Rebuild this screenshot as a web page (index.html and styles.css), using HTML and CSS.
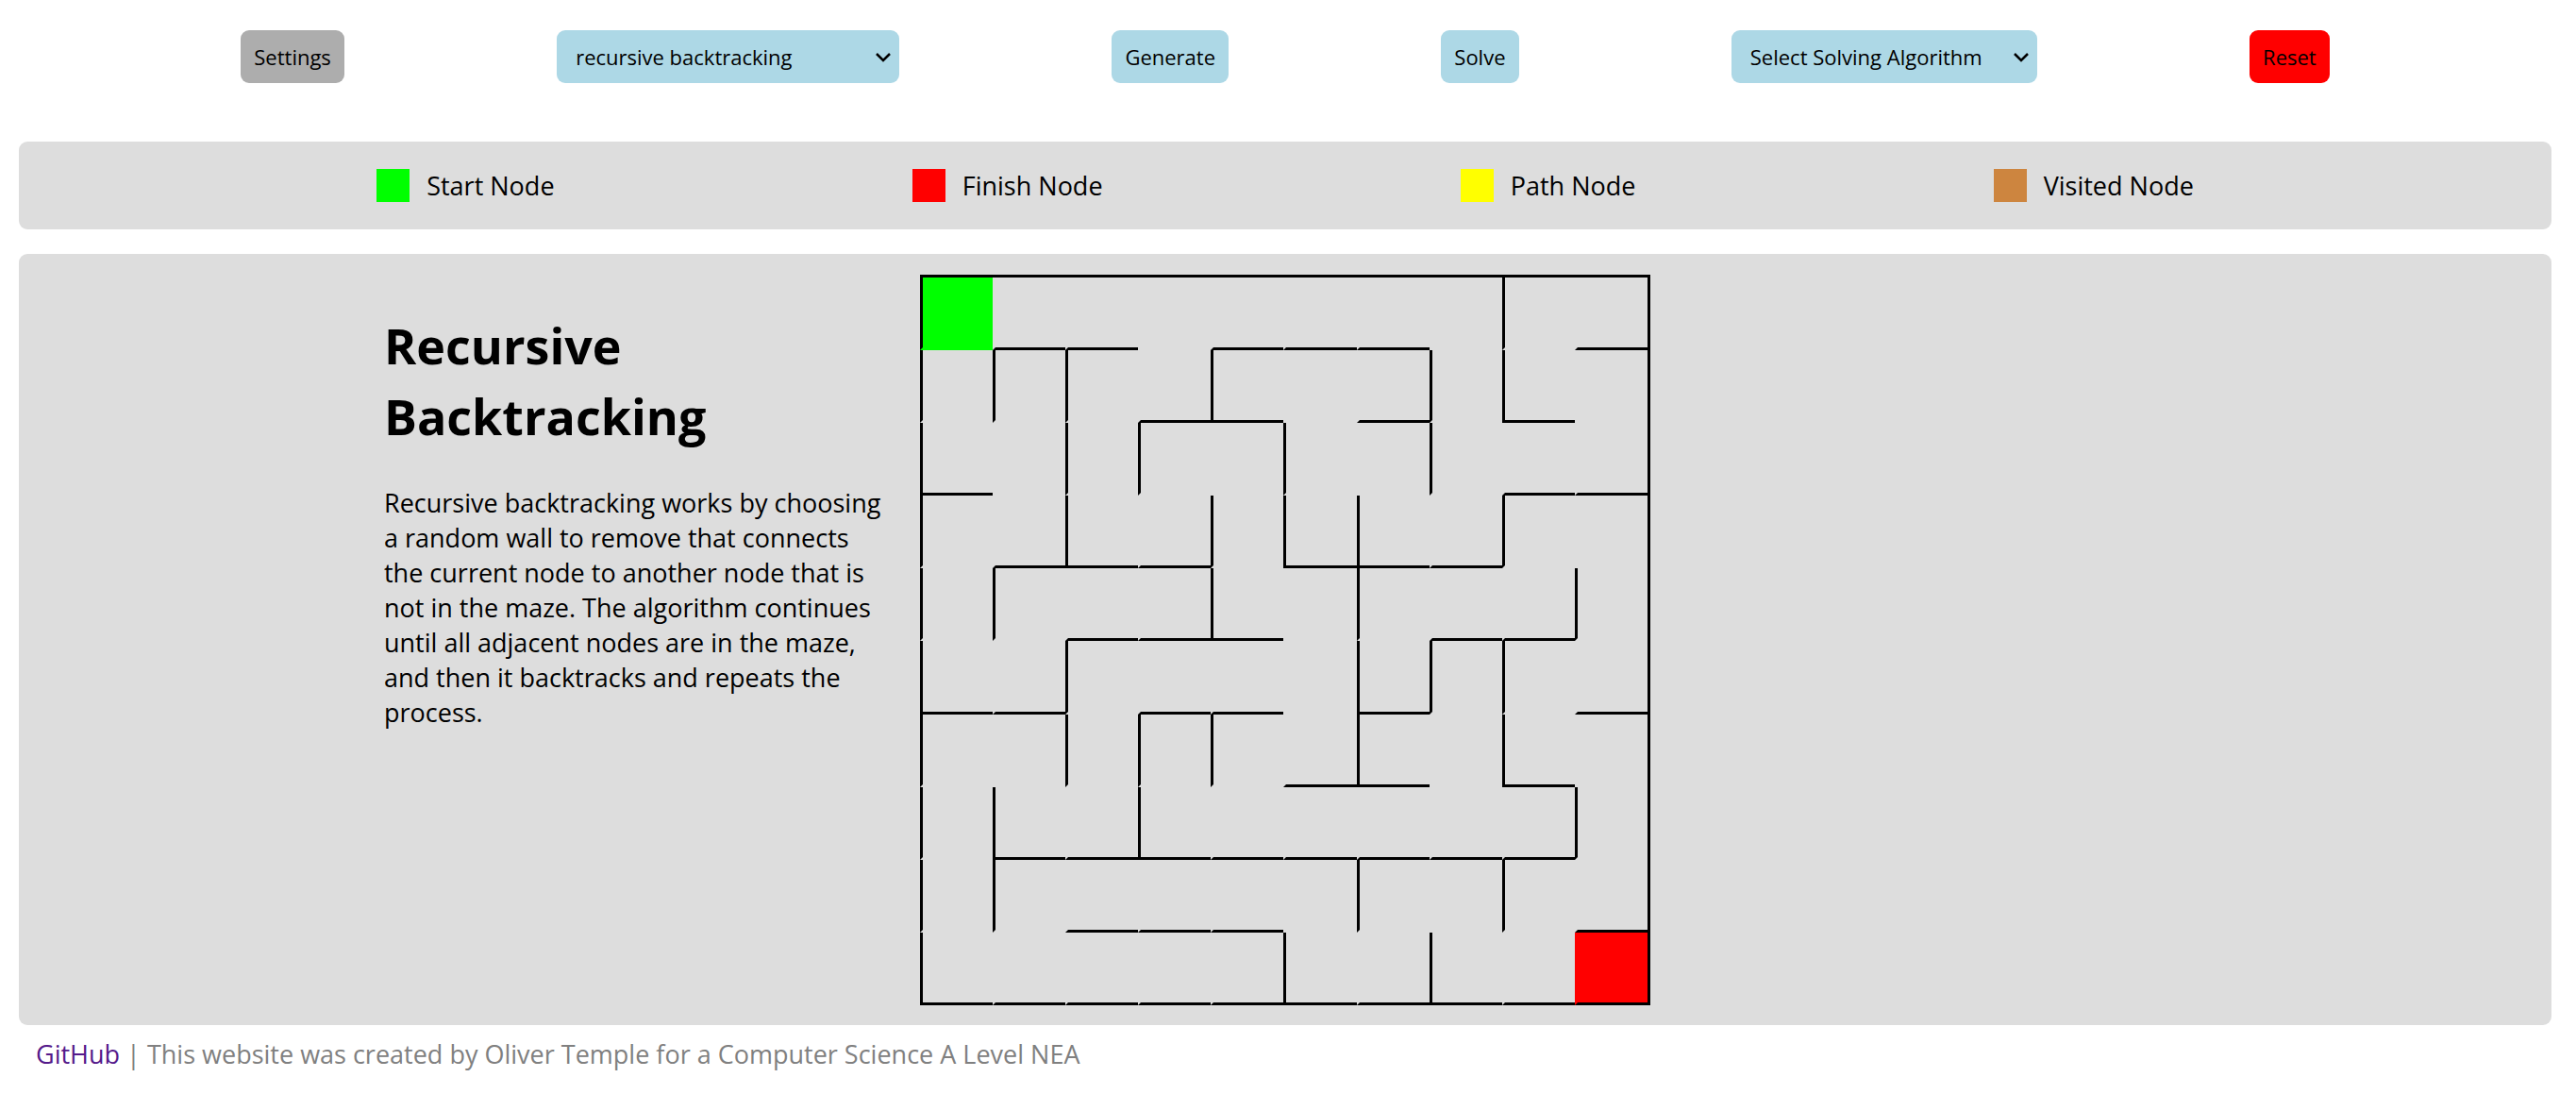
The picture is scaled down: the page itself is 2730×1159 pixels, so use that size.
FILE: index.html
```html
<!DOCTYPE html>
<html lang="en">
<head>
  <meta charset="utf-8">
  <title>Maze Generator and Solver</title>
  <link rel="stylesheet" href="styles.css">
</head>
<body>
  <header class="toolbar">
    <button class="control control--settings" type="button">Settings</button>
    <div class="picker picker--generate">
      <select class="control picker__select" aria-label="Generation algorithm">
        <option selected>recursive backtracking</option>
      </select>
      <svg class="picker__arrow" viewBox="0 0 16 10" aria-hidden="true"><path d="M1 1l7 7 7-7"/></svg>
    </div>
    <button class="control" type="button">Generate</button>
    <button class="control" type="button">Solve</button>
    <div class="picker picker--solve">
      <select class="control picker__select" aria-label="Solving algorithm">
        <option selected>Select Solving Algorithm</option>
      </select>
      <svg class="picker__arrow" viewBox="0 0 16 10" aria-hidden="true"><path d="M1 1l7 7 7-7"/></svg>
    </div>
    <button class="control control--reset" type="button">Reset</button>
  </header>

  <ul class="panel legend">
    <li class="legend__item"><span class="swatch swatch--start"></span>Start Node</li>
    <li class="legend__item"><span class="swatch swatch--finish"></span>Finish Node</li>
    <li class="legend__item"><span class="swatch swatch--path"></span>Path Node</li>
    <li class="legend__item"><span class="swatch swatch--visited"></span>Visited Node</li>
  </ul>

  <main class="panel stage">
    <section class="info">
      <h1 class="info__title">Recursive Backtracking</h1>
      <p class="info__text">Recursive backtracking works by choosing a random wall to remove that connects the current node to another node that is not in the maze. The algorithm continues until all adjacent nodes are in the maze, and then it backtracks and repeats the process.</p>
    </section>
    <div class="maze" id="maze"></div>
  </main>

  <footer class="footer">
    <a class="footer__link" href="https://github.com">GitHub</a> | This website was created by Oliver Temple for a Computer Science A Level NEA
  </footer>
  <script src="maze.js"></script>
</body>
</html>
```
FILE: styles.css
```css
* {
  box-sizing: border-box;
}

body {
  margin: 0;
  padding: 32px 26px 0 20px;
  background: #fff;
  color: #000;
  font-family: "Segoe UI", "Open Sans", "Noto Sans", sans-serif;
  font-size: 27px;
  line-height: 37px;
}

.toolbar {
  display: flex;
  justify-content: space-evenly;
  align-items: center;
  padding: 0 10px;
  margin-bottom: 62px;
}

.control {
  height: 56px;
  padding: 0 14px;
  border: 0;
  border-radius: 9px;
  background: #add8e6;
  color: #000;
  font-family: inherit;
  font-size: 22px;
  cursor: pointer;
}

.control--settings {
  background: #adadad;
}

.control--reset {
  background: #f00;
}

.picker {
  position: relative;
}

.picker--generate {
  width: 363px;
}

.picker--solve {
  width: 324px;
}

.picker__select {
  display: block;
  width: 100%;
  padding: 0 40px 0 20px;
  appearance: none;
}

.picker__arrow {
  position: absolute;
  top: 24px;
  right: 9px;
  width: 16px;
  height: 10px;
  fill: none;
  stroke: #000;
  stroke-width: 2.5;
  pointer-events: none;
}

.panel {
  margin: 0 0 26px;
  border-radius: 9px;
  background: #ddd;
}

.legend {
  display: flex;
  justify-content: space-evenly;
  align-items: center;
  padding: 28px 0;
  list-style: none;
}

.legend__item {
  display: flex;
  align-items: center;
  gap: 18px;
}

.swatch {
  width: 35px;
  height: 35px;
}

.swatch--start {
  background: #0f0;
}

.swatch--finish {
  background: #f00;
}

.swatch--path {
  background: #ff0;
}

.swatch--visited {
  background: #cd853f;
}

.stage {
  display: grid;
  grid-template-columns: 1fr auto 1fr;
  padding: 22px 0 21px;
  margin-bottom: 12px;
}

.info {
  justify-self: end;
  width: 568px;
  padding: 37px 34px 0 0;
}

.info__title {
  margin: 0 0 36px;
  font-size: 52px;
  line-height: 75px;
}

.info__text {
  margin: 0;
}

.maze {
  display: grid;
  grid-template-columns: repeat(10, 1fr);
  grid-template-rows: repeat(10, 1fr);
  width: 774px;
  aspect-ratio: 1;
  border-top: 3px solid #000;
  border-right: 3px solid #000;
}

.cell {
  border: 0 solid transparent;
  border-left-width: 3px;
  border-bottom-width: 3px;
}

.cell--wall-left {
  border-left-color: #000;
}

.cell--wall-bottom {
  border-bottom-color: #000;
}

.cell--start {
  background: #0f0;
}

.cell--finish {
  background: #f00;
}

.footer {
  padding: 0 18px;
  color: #808080;
}

.footer__link {
  color: #551a8b;
  text-decoration: none;
}
```
FILE: maze.js
```js
// One digit per cell: 1 = wall on the left, 2 = wall below, 3 = both.
const rows = [
  "1220222012",
  "1112302130",
  "3011010122",
  "1232133210",
  "1122301221",
  "3212203112",
  "1011123030",
  "1323222221",
  "1122201012",
  "3222232322",
];

const maze = document.getElementById("maze");
const last = rows.length - 1;

rows.forEach((row, y) => {
  [...row].forEach((digit, x) => {
    const walls = Number(digit);
    const cell = document.createElement("div");
    cell.classList.add("cell");
    cell.classList.toggle("cell--wall-left", (walls & 1) !== 0);
    cell.classList.toggle("cell--wall-bottom", (walls & 2) !== 0);
    cell.classList.toggle("cell--start", x === 0 && y === 0);
    cell.classList.toggle("cell--finish", x === last && y === last);
    maze.append(cell);
  });
});
```
